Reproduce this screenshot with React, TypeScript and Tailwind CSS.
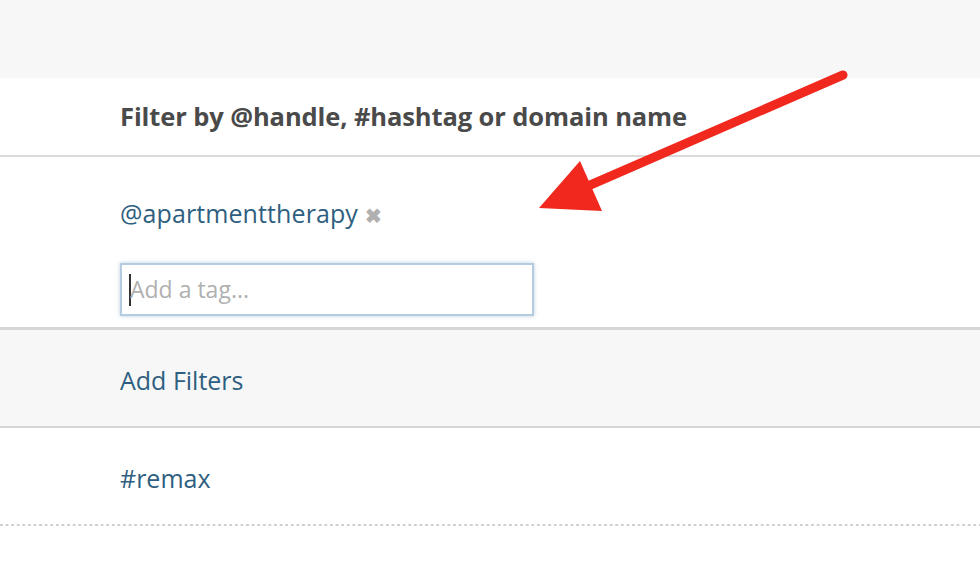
import React from "react";

export default function App() {
  return (
    <div
      className="relative w-[980px] h-[568px] overflow-hidden bg-white"
      style={{ fontFamily: '"Open Sans", "Noto Sans", sans-serif' }}
    >
      <div className="h-[78px] bg-[#f7f7f7]" />
      <div className="h-[79px] flex items-center pl-[120px] border-b-2 border-[#dadada]">
        <span className="text-[25.5px] font-bold text-[#4a4a4a] tracking-[-0.1px]">
          Filter by @handle, #hashtag or domain name
        </span>
      </div>
      <div className="h-[173px] pl-[120px] pt-[36px] border-b-[3px] border-[#d6d6d6]">
        <div className="flex items-center h-[40px]">
          <span className="text-[25px] text-[#2f5f80] leading-none tracking-[0.1px]">@apartmenttherapy</span>
          <span className="ml-[7px] mt-[5px] text-[#b0b0b0] text-[20px] font-bold leading-none">✖</span>
        </div>
        <div className="mt-[30px] w-[414px] h-[53px] border-2 border-[#b4cbe0] shadow-[0_0_4px_rgba(120,160,200,0.5)] flex items-center pl-[7px]">
          <span className="w-[2px] h-[32px] bg-[#333]" />
          <span className="text-[23px] text-[#b0b0b0] leading-none -ml-[1px]">Add a tag...</span>
        </div>
      </div>
      <div className="h-[98px] bg-[#f7f7f7] flex items-center pl-[120px] pt-[5px] border-b-2 border-[#d6d6d6]">
        <span className="text-[25px] text-[#2f5f80]">Add Filters</span>
      </div>
      <div className="h-[96px] flex items-center pl-[120px] pt-[6px]">
        <span className="text-[25px] text-[#2f5f80]">#remax</span>
      </div>
      <div className="h-[2px] bg-[linear-gradient(to_right,#cfcfcf_50%,transparent_50%)] bg-[length:5.6px_2px]" />
      <svg className="absolute left-0 top-0" width="980" height="568">
        <line x1="843" y1="75" x2="588" y2="186" stroke="#f0281e" strokeWidth="9" strokeLinecap="round" />
        <polygon points="539,208 580,161 602,211" fill="#f0281e" />
      </svg>
    </div>
  );
}
